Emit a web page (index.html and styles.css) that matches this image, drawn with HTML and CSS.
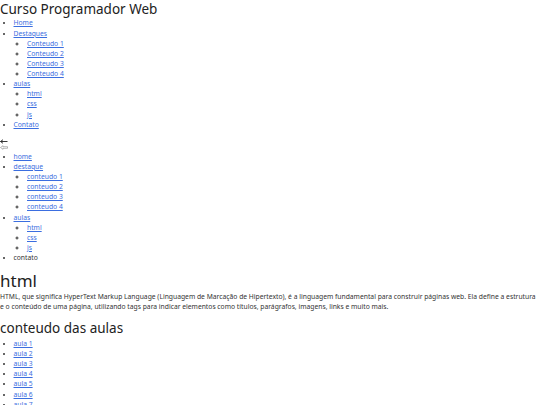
FILE: index.html
```html
<!DOCTYPE html>
<html lang="pt-BR">
<head>
<meta charset="utf-8">
<title>Curso Programador Web</title>
<link rel="stylesheet" href="styles.css">
</head>
<body>
<header class="topo">
  <h1 class="titulo">Curso Programador Web</h1>
  <ul class="menu">
    <li><a href="#">Home</a></li>
    <li><a href="#">Destaques</a>
      <ul class="sub">
        <li><a href="#">Conteudo 1</a></li>
        <li><a href="#">Conteudo 2</a></li>
        <li><a href="#">Conteudo 3</a></li>
        <li><a href="#">Conteudo 4</a></li>
      </ul>
    </li>
    <li><a href="#">aulas</a>
      <ul class="sub">
        <li><a href="#">html</a></li>
        <li><a href="#">css</a></li>
        <li><a href="#">js</a></li>
      </ul>
    </li>
    <li><a href="#">Contato</a></li>
  </ul>
</header>
<div class="icones">
  <svg class="seta" width="8" height="5" viewBox="0 0 8 5"><path d="M0.5 2.5 L3 0.7 M0.5 2.5 L3 4.3 M0.5 2.5 H7.5" stroke="#222" stroke-width="0.9" fill="none"/></svg>
  <svg class="seta" width="8" height="5" viewBox="0 0 8 5"><path d="M0.5 2.5 L3 0.7 V1.7 H7.5 V3.3 H3 V4.3 Z" stroke="#888" stroke-width="0.6" fill="none"/></svg>
</div>
<nav>
  <ul class="menu">
    <li><a href="#">home</a></li>
    <li><a href="#">destaque</a>
      <ul class="sub">
        <li><a href="#">conteudo 1</a></li>
        <li><a href="#">conteudo 2</a></li>
        <li><a href="#">conteudo 3</a></li>
        <li><a href="#">conteudo 4</a></li>
      </ul>
    </li>
    <li><a href="#">aulas</a>
      <ul class="sub">
        <li><a href="#">html</a></li>
        <li><a href="#">css</a></li>
        <li><a href="#">js</a></li>
      </ul>
    </li>
    <li>contato</li>
  </ul>
</nav>
<main>
  <h2 class="destaque">html</h2>
  <p class="texto">HTML, que significa HyperText Markup Language (Linguagem de Marcação de Hipertexto), é a linguagem fundamental para construir páginas web. Ela define a estrutura e o conteúdo de uma página, utilizando tags para indicar elementos como títulos, parágrafos, imagens, links e muito mais.</p>
  <h2 class="secao">conteudo das aulas</h2>
  <ul class="menu">
    <li><a href="#">aula 1</a></li>
    <li><a href="#">aula 2</a></li>
    <li><a href="#">aula 3</a></li>
    <li><a href="#">aula 4</a></li>
    <li><a href="#">aula 5</a></li>
    <li><a href="#">aula 6</a></li>
    <li><a href="#">aula 7</a></li>
  </ul>
</main>
</body>
</html>
```
FILE: styles.css
```css
html, body {
  margin: 0;
  padding: 0;
  background: #fff;
}
body {
  font-family: "Noto Sans", "Open Sans", sans-serif;
  font-size: 6.75px;
  line-height: 10.125px;
  color: #333;
}
a {
  color: #3b6ee0;
}
.titulo {
  margin: 0;
  font-size: 13.5px;
  font-weight: 400;
  line-height: 18.4px;
  color: #222;
}
.menu {
  margin: 0;
  padding-left: 13.5px;
  list-style-type: disc;
}
.sub {
  margin: 0;
  padding-left: 13.5px;
  list-style-type: circle;
}
.icones {
  display: flex;
  flex-direction: column;
  gap: 1px;
  padding: 9px 0 2px;
}
.seta {
  display: block;
}
.destaque {
  margin: 5.5px 0 0;
  font-size: 17px;
  font-weight: 400;
  line-height: 23.1px;
  color: #222;
}
.texto {
  margin: 0;
  color: #333;
}
.secao {
  margin: 6.5px 0 2px;
  font-size: 13.5px;
  font-weight: 400;
  line-height: 18.4px;
  color: #222;
}
```
